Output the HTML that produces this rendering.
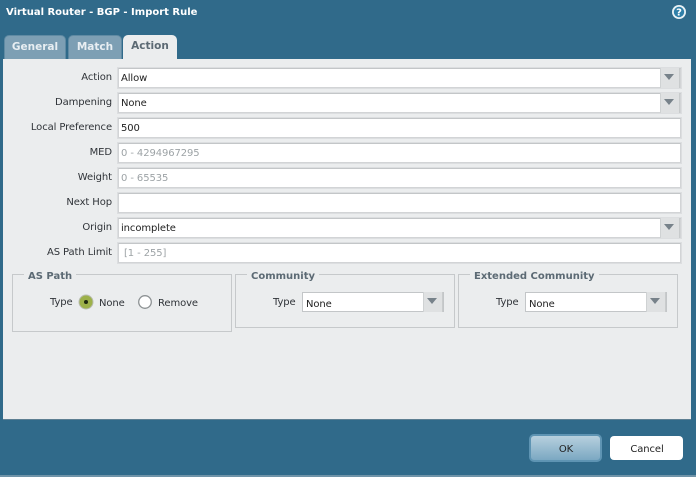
<!DOCTYPE html>
<html><head><meta charset="utf-8"><style>
html,body{margin:0;padding:0}
body{width:696px;height:477px;overflow:hidden;position:relative;background:#306a8a;font-family:"DejaVu Sans","Liberation Sans",sans-serif;font-size:10px;letter-spacing:-.1px;color:#333}
div,span{position:absolute;box-sizing:border-box;white-space:nowrap}
.lbl{right:584px;text-align:right;line-height:14px;color:#2f3338}
.f{left:118px;width:563px;height:20px;background:#fff;border:1px solid #d2d4d6;border-top-color:#c3c6c8;line-height:20px;padding-left:2px;color:#222;box-shadow:0 0 0 1px #dcdee0}
.ph{color:#9da3a6}
.s{position:absolute;right:0;top:-1px;bottom:-1px;width:20px;background:#dfe1e2;border-left:1px solid #cfd2d3;border-right:1px solid #c8cbcc}
.s:after{content:"";position:absolute;left:3px;top:6px;border-left:5.5px solid transparent;border-right:5.5px solid transparent;border-top:6px solid #77828a}
.g{border:1px solid #c6c9cb}
.gt{background:#ebedee;padding:0 4px;font-weight:bold;color:#5c6a74;line-height:14px;font-size:10px;letter-spacing:0}
.tab{top:35px;height:25px;border-radius:5px 5px 0 0;text-align:center;font-weight:bold;font-size:10.5px;line-height:22px;letter-spacing:0}
.sm{left:302px;top:292px;width:142px;height:20px;line-height:23px;box-shadow:none;padding-left:3px;border-color:#c3c6c8}
.t2{line-height:14px;color:#2f3338}
</style></head><body>
<div style="left:6px;top:5px;color:#fff;font-weight:bold;font-size:10px;line-height:16px;letter-spacing:0">Virtual Router - BGP - Import Rule</div>
<svg style="position:absolute;left:671px;top:4px" width="16" height="16" viewBox="0 0 16 16"><circle cx="8" cy="8" r="7" fill="#e8f1f5"/><circle cx="8" cy="8" r="5.2" fill="#2f7fa8"/><text x="8" y="11.5" font-family="DejaVu Sans" font-size="10" font-weight="bold" fill="#fff" text-anchor="middle">?</text></svg>

<div class="tab" style="left:4px;width:62px;background:#7d9fb4;color:#e8eef2;border:1px solid #5f8aa3;border-bottom:0">General</div>
<div class="tab" style="left:68px;width:54px;background:#7d9fb4;color:#e8eef2;border:1px solid #5f8aa3;border-bottom:0">Match</div>
<div style="left:3px;top:59px;width:688px;height:361px;background:#ebedee;border-bottom:1px solid #5d7f92"></div>
<div class="tab" style="left:123px;width:54px;background:#ebedee;color:#5c6a74;height:26px">Action</div>

<div class="lbl" style="top:71px">Action</div>
<div class="f" style="top:68px">Allow<span class="s"></span></div>
<div class="lbl" style="top:96px">Dampening</div>
<div class="f" style="top:93px">None<span class="s"></span></div>
<div class="lbl" style="top:121px">Local Preference</div>
<div class="f" style="top:118px">500</div>
<div class="lbl" style="top:146px">MED</div>
<div class="f ph" style="top:143px">0 - 4294967295</div>
<div class="lbl" style="top:171px">Weight</div>
<div class="f ph" style="top:168px">0 - 65535</div>
<div class="lbl" style="top:196px">Next Hop</div>
<div class="f" style="top:193px"></div>
<div class="lbl" style="top:221px">Origin</div>
<div class="f" style="top:218px">incomplete<span class="s"></span></div>
<div class="lbl" style="top:246px">AS Path Limit</div>
<div class="f ph" style="top:243px;padding-left:5px">[1 - 255]</div>

<div class="g" style="left:12px;top:274px;width:220px;height:58px"></div>
<div class="gt" style="left:24px;top:270px">AS Path</div>
<div class="t2" style="left:50px;top:296px">Type</div>
<svg style="position:absolute;left:78px;top:294px" width="16" height="16" viewBox="0 0 16 16"><circle cx="8" cy="8" r="7" fill="#9db14a" stroke="#b9bdb0" stroke-width="1"/><circle cx="8" cy="8" r="2" fill="#1f2a10"/></svg>
<div class="t2" style="left:99px;top:297px">None</div>
<svg style="position:absolute;left:137px;top:294px" width="16" height="16" viewBox="0 0 16 16"><circle cx="8" cy="8" r="6.3" fill="#fff" stroke="#8d9294" stroke-width="1.3"/></svg>
<div class="t2" style="left:158px;top:297px">Remove</div>

<div class="g" style="left:235px;top:274px;width:220px;height:54px"></div>
<div class="gt" style="left:247px;top:270px">Community</div>
<div class="t2" style="left:273px;top:296px">Type</div>
<div class="f sm">None<span class="s"></span></div>

<div class="g" style="left:458px;top:274px;width:220px;height:54px"></div>
<div class="gt" style="left:470px;top:270px">Extended Community</div>
<div class="t2" style="left:496px;top:296px">Type</div>
<div class="f sm" style="left:525px">None<span class="s"></span></div>

<div style="left:529px;top:434px;width:73px;height:28px;border-radius:5px;background:linear-gradient(#b7d0de,#7ba8c2);border:2px solid #5e94b3;text-align:center;line-height:28px;color:#222;padding-left:1px">OK</div>
<div style="left:610px;top:436px;width:73px;height:24px;border-radius:4px;background:#fff;text-align:center;line-height:27px;color:#222;padding-left:1px">Cancel</div>
<div style="left:0;top:475px;width:696px;height:2px;background:#6f93a8"></div>
</body></html>
